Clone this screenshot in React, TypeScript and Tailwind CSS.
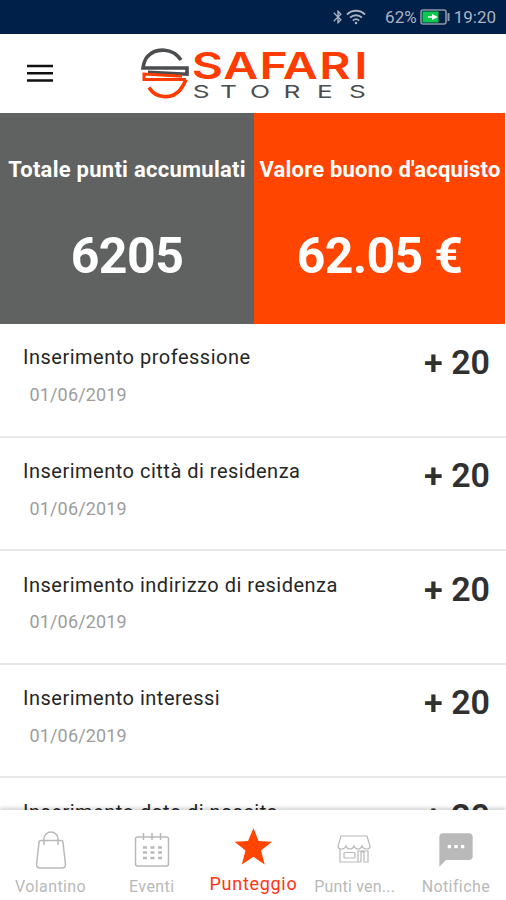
import { MdBluetooth, MdSms } from 'react-icons/md';

const entries = [
  { label: 'Inserimento professione', date: '01/06/2019', points: '+ 20' },
  { label: 'Inserimento città di residenza', date: '01/06/2019', points: '+ 20' },
  { label: 'Inserimento indirizzo di residenza', date: '01/06/2019', points: '+ 20' },
  { label: 'Inserimento interessi', date: '01/06/2019', points: '+ 20' },
  { label: 'Inserimento data di nascita', date: '01/06/2019', points: '+ 20' },
];

function StatusBar() {
  return (
    <div className="flex h-[34px] shrink-0 items-center justify-end bg-[#00204a] pr-[10px] text-[#aab3c0]">
      <MdBluetooth className="h-[18px] w-[16px]" />
      <svg className="h-[18px] w-[20px]" viewBox="0 0 20 18" fill="none" stroke="currentColor" strokeWidth="1.8">
        <path d="M1 6.5C6 1.5 14 1.5 19 6.5" />
        <path d="M4 9.7C7.5 6.4 12.5 6.4 16 9.7" />
        <path d="M6.8 12.6C8.8 10.8 11.2 10.8 13.2 12.6" />
        <circle cx="10" cy="15" r="1.3" fill="currentColor" stroke="none" />
      </svg>
      <span className="ml-[19px] text-[17px] leading-5">62%</span>
      <svg className="ml-[3px] h-4 w-[30px]" viewBox="0 0 30 16" fill="none">
        <rect x="1" y="1" width="25" height="14" rx="2" stroke="#8d96a4" strokeWidth="1.6" />
        <rect x="2.5" y="2.5" width="16" height="11" fill="#0cc84c" />
        <path d="M28.5 4v8" stroke="#8d96a4" strokeWidth="2" />
        <path d="M8 7.2h4V5l6 3-6 3V8.8H8z" fill="#fff" />
      </svg>
      <span className="ml-[4px] text-[17px] leading-5">19:20</span>
    </div>
  );
}

function Logo() {
  return (
    <svg className="ml-[86px] h-[64px] w-[240px]" viewBox="0 -4 240 64">
      <g fill="none" strokeWidth="3.6">
        <path d="M42 14C34 2 17 1 8 11Q5 15 4 22H48V28.200L9 26.300" stroke="#4b4d4f" />
        <path d="M47 33.500H5V28L43 30.200" stroke="#ff3c00" strokeWidth="3" />
        <path d="M10 41.500C17 53 33 53.500 41 44Q44.500 40 47 33.500" stroke="#ff3c00" />
      </g>
      <text transform="scale(1.3 1)" x="40.5 64.8 92.7 110.5 138.6 165.600" y="33" fill="#ff3c00" className="font-['Inter'] text-[37px] font-semibold">
        SAFARI
      </text>
      <text transform="scale(1.5 1)" x="35.8 54 74 96.300 118.700 140" y="52" fill="#4b4d4f" className="font-['Inter'] text-[17.5px]">
        STORES
      </text>
    </svg>
  );
}

function Header() {
  return (
    <header className="flex h-[79px] shrink-0 items-center bg-white pl-[27px]">
      <svg className="-mt-px h-[20px] w-[26px] shrink-0" viewBox="0 0 26 20" stroke="#111" strokeWidth="2.4">
        <path d="M0 3h26M0 10.300h26M0 17.500h26" />
      </svg>
      <Logo />
    </header>
  );
}

function Totals() {
  return (
    <section className="flex h-[211px] shrink-0 pr-px text-center font-bold text-white">
      <div className="w-[254px] bg-[#606261] pt-[44px]">
        <p className="text-[22px] leading-[26px] tracking-[0.26px] whitespace-nowrap">Totale punti accumulati</p>
        <p className="mt-[43px] text-[50px] leading-[60px] tracking-[-0.5px]">6205</p>
      </div>
      <div className="w-[251px] bg-[#ff4500] pt-[44px]">
        <p className="pl-px text-[22px] leading-[26px] tracking-[0.2px] whitespace-nowrap">Valore buono d'acquisto</p>
        <p className="mt-[43px] text-[50px] leading-[60px] tracking-[-0.7px]">62.05 €</p>
      </div>
    </section>
  );
}

function EntryRow({ label, date, points }: { label: string; date: string; points: string }) {
  return (
    <li className="flex h-[113.6px] shrink-0 justify-between border-b-2 border-[#e8e8e8] pr-[16px] pl-[23px]">
      <div className="pt-[20.4px]">
        <p className="text-[20px] leading-[26px] tracking-[0.5px] text-[#262626]">{label}</p>
        <p className="mt-[13.6px] pl-[6.5px] text-[18px] leading-[22px] tracking-[0.15px] text-[#9d9d9d]">{date}</p>
      </div>
      <p className="pt-[17.6px] text-[34px] leading-[40px] font-semibold text-[#303030]">{points}</p>
    </li>
  );
}

function BagIcon() {
  return (
    <svg className="h-10 w-9" viewBox="0 0 36 40" fill="none" stroke="#b9b9b9" strokeWidth="1.5">
      <path d="M8 10.500h20a2 2 0 0 1 2 2l2.500 22q0 3.500-3.500 3.500H7q-3.500 0-3.500-3.500l2.500-22a2 2 0 0 1 2-2z" />
      <path d="M11 15V9a7 7 0 0 1 14 0v6" />
    </svg>
  );
}

function CalendarIcon() {
  return (
    <svg className="h-10 w-9" viewBox="0 0 36 40" fill="none" stroke="#b9b9b9" strokeWidth="1.5">
      <rect x="1.500" y="7" width="33" height="29" rx="2" />
      <path d="M9.500 3v7M18 3v7M26.500 3v7" />
      <path d="M9 17.500h19M9 22.500h19M9 28h19" strokeWidth="2.5" strokeDasharray="4 3.5" />
    </svg>
  );
}

function StoreIcon() {
  return (
    <svg className="h-10 w-9" viewBox="0 0 36 40" fill="none" stroke="#b9b9b9" strokeWidth="1.2">
      <path d="M5 6h26l3 10q0 3-3 3-4 0-5-3-1 3-4 3t-4-3q-1 3-4 3t-4-3q-1 3-5 3-3 0-3-3z" />
      <path d="M4 19v13h18V21h10v11h-4V22h-3v10h-3" />
      <rect x="8" y="22.5" width="11" height="5.5" rx="1" />
    </svg>
  );
}

function TabBar() {
  const tab = 'flex w-[101.2px] flex-col items-center text-[16px] leading-5 tracking-[0.4px] text-[#b9b9b9]';
  return (
    <nav className="relative flex h-[90px] shrink-0 bg-white pt-[20px] shadow-[0_-2px_4px_rgba(0,0,0,0.18)]">
      <div className={tab}>
        <BagIcon />
        <span className="mt-[7px]">Volantino</span>
      </div>
      <div className={tab}>
        <CalendarIcon />
        <span className="mt-[7px]">Eventi</span>
      </div>
      <div className="flex w-[101.2px] flex-col items-center text-[18px] leading-5 tracking-[0.7px] text-[#ff3413]">
        <svg className="-mt-[3px] h-10 w-10" viewBox="0 0 40 40" fill="#ff4500">
          <path d="M20.500 1l5 13 13.500.800-11 8.800 3.700 13.900-11.200-7.700L8.800 37.500 12.500 23.600 1.500 14.800 15 14z" />
        </svg>
        <span className="mt-[7px] pl-px">Punteggio</span>
      </div>
      <div className={tab}>
        <StoreIcon />
        <span className="mt-[7px] pl-px tracking-[0.2px]">Punti ven...</span>
      </div>
      <div className={tab}>
        <MdSms className="ml-px h-10 w-10" />
        <span className="mt-[7px] pl-px">Notifiche</span>
      </div>
    </nav>
  );
}

export default function App() {
  return (
    <div className="flex h-[900px] w-[506px] flex-col overflow-hidden bg-white font-['Roboto',sans-serif]">
      <StatusBar />
      <Header />
      <Totals />
      <ul className="flex min-h-0 flex-1 flex-col overflow-hidden">
        {entries.map((entry) => (
          <EntryRow key={entry.label} {...entry} />
        ))}
      </ul>
      <TabBar />
    </div>
  );
}
